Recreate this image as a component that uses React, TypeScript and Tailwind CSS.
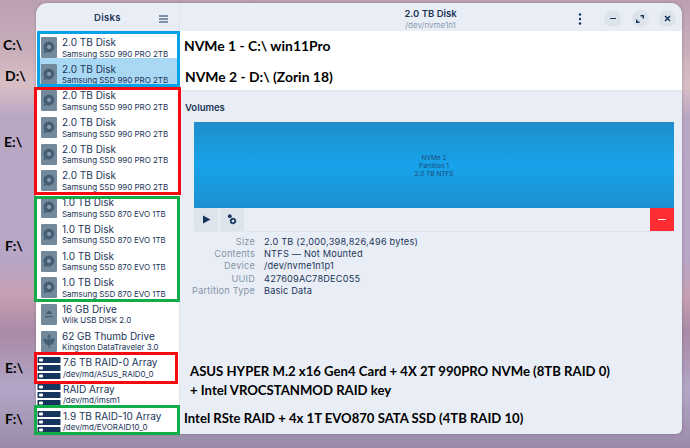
import { ReactNode } from "react";

const NOTE = "font-['Lato','Open_Sans',sans-serif] font-bold text-black";

type Kind = "disk" | "drive" | "thumb" | "raid";

const DISKS: { title: string; sub: string; kind: Kind; selected?: boolean }[] = [
  { title: "2.0 TB Disk", sub: "Samsung SSD 990 PRO 2TB", kind: "disk" },
  { title: "2.0 TB Disk", sub: "Samsung SSD 990 PRO 2TB", kind: "disk", selected: true },
  { title: "2.0 TB Disk", sub: "Samsung SSD 990 PRO 2TB", kind: "disk" },
  { title: "2.0 TB Disk", sub: "Samsung SSD 990 PRO 2TB", kind: "disk" },
  { title: "2.0 TB Disk", sub: "Samsung SSD 990 PRO 2TB", kind: "disk" },
  { title: "2.0 TB Disk", sub: "Samsung SSD 990 PRO 2TB", kind: "disk" },
  { title: "1.0 TB Disk", sub: "Samsung SSD 870 EVO 1TB", kind: "disk" },
  { title: "1.0 TB Disk", sub: "Samsung SSD 870 EVO 1TB", kind: "disk" },
  { title: "1.0 TB Disk", sub: "Samsung SSD 870 EVO 1TB", kind: "disk" },
  { title: "1.0 TB Disk", sub: "Samsung SSD 870 EVO 1TB", kind: "disk" },
  { title: "16 GB Drive", sub: "Wilk USB DISK 2.0", kind: "drive" },
  { title: "62 GB Thumb Drive", sub: "Kingston DataTraveler 3.0", kind: "thumb" },
  { title: "7.6 TB RAID-0 Array", sub: "/dev/md/ASUS_RAID0_0", kind: "raid" },
  { title: "RAID Array", sub: "/dev/md/imsm1", kind: "raid" },
  { title: "1.9 TB RAID-10 Array", sub: "/dev/md/EVORAID10_0", kind: "raid" },
];

const DETAILS = [
  ["Size", "2.0 TB (2,000,398,826,496 bytes)"],
  ["Contents", "NTFS — Not Mounted"],
  ["Device", "/dev/nvme1n1p1"],
  ["UUID", "427609AC78DEC055"],
  ["Partition Type", "Basic Data"],
];

function DiskIcon({ kind }: { kind: Kind }) {
  if (kind === "raid") {
    return (
      <svg width="24" height="24" viewBox="0 0 24 24" className="ml-[-4px] mt-[5px] shrink-0">
        {[1, 9, 17].map((y) => (
          <g key={y}>
            <rect x="0.5" y={y} width="23" height="6" rx="0.5" fill="#16355c" />
            <rect x="2" y={y + 1.5} width="4" height="3" rx="1" fill="#fff" />
          </g>
        ))}
      </svg>
    );
  }
  return (
    <svg width="16" height="21" viewBox="0 0 16 21" className="mt-[6px] shrink-0">
      <rect width="16" height="21" rx="1" fill="#738a9c" />
      {kind === "disk" && (
        <>
          <path d="M8 4.5a5.5 5.5 0 1 1-2.6 10.4L2.7 16l.6-3A5.5 5.5 0 0 1 8 4.5Z" fill="#465f75" />
          <circle cx="8" cy="10" r="2" fill="#8ca0b0" />
        </>
      )}
      {kind === "drive" && (
        <>
          <path d="M8 6.5 11.5 10h-7Z" fill="#43596d" />
          <rect x="4" y="12" width="8" height="1.2" fill="#43596d" />
        </>
      )}
      {kind === "thumb" && (
        <path
          d="M8 4v13M8 4 6.8 6h2.4ZM4 8.5v2.5c0 1.5 1 2 4 3 3-1 4-1.5 4-3V8.5M3 8h2v2H3Zm8 0h2v2h-2Z"
          fill="#465f75"
          stroke="#465f75"
          strokeWidth="1.1"
        />
      )}
    </svg>
  );
}

function RoundButton({ children }: { children: ReactNode }) {
  return (
    <div className="flex h-[17px] w-[17px] items-center justify-center rounded-full bg-[#dce3ea]">
      {children}
    </div>
  );
}

function Box({ className }: { className: string }) {
  return <div className={`absolute border-[3px] ${className}`} />;
}

function Label({ className, children }: { className: string; children: ReactNode }) {
  return <div className={`absolute text-[14px] leading-none ${NOTE} ${className}`}>{children}</div>;
}

export default function App() {
  return (
    <div className="relative h-[448px] w-[690px] overflow-hidden bg-[linear-gradient(180deg,#bba0b4_0%,#c9b0bb_12%,#d8bfc4_19%,#baa7c4_26%,#b7a6c6_58%,#c6a0b2_66%,#a98aa6_74%,#b2a6c6_87%,#9a8aa8_100%)] font-['Inter',sans-serif] text-[#1c3557]">
      {/* disks window */}
      <div className="absolute left-[36px] top-[3px] flex h-[431px] w-[646px] overflow-hidden rounded-b-[6px] rounded-t-[11px] bg-[#e9eef6] shadow-[0_0_3px_rgba(60,40,70,0.35)]">
        <aside className="flex w-[144px] shrink-0 flex-col border-r border-[#dfe5ec]">
          <div className="flex h-[28px] shrink-0 items-center justify-between pl-[58px] pr-[11px] pt-[3px]">
            <span className="text-[9.5px] font-semibold tracking-[0.3px]">Disks</span>
            <svg width="9" height="8" viewBox="0 0 9 8">
              <path d="M0 1h9M0 4h9M0 7h9" stroke="#16355c" strokeWidth="1.2" />
            </svg>
          </div>
          <div className="flex-1 bg-white pl-[3.5px]">
            {DISKS.map((d, i) => (
              <div
                key={i}
                className={`flex h-[26.7px] items-start gap-[5px] pl-[1.5px] ${d.selected ? "bg-[#a9d8f5]" : ""}`}
              >
                <DiskIcon kind={d.kind} />
                <div className={`min-w-0 pt-[5px] ${d.kind === "raid" ? "-ml-[3px]" : ""}`}>
                  <div className="whitespace-nowrap text-[10px] leading-[12.5px]">{d.title}</div>
                  <div className="whitespace-nowrap text-[8px] leading-[11px] tracking-[-0.03px]">{d.sub}</div>
                </div>
              </div>
            ))}
          </div>
        </aside>

        <main className="flex min-w-0 flex-1 flex-col">
          <header className="relative flex h-[28px] shrink-0 items-center justify-end pr-[6px] pt-[3px]">
            <div className="absolute left-0 right-0 top-[4px] pr-[1px] text-center">
              <div className="text-[9.5px] font-semibold leading-[13px]">2.0 TB Disk</div>
              <div className="text-[8px] leading-[10px] text-[#8e9cad]">/dev/nvme1n1</div>
            </div>
            <svg width="4" height="12" viewBox="0 0 4 12" className="mr-[22px]">
              <circle cx="2" cy="1.5" r="1.2" fill="#16355c" />
              <circle cx="2" cy="6" r="1.2" fill="#16355c" />
              <circle cx="2" cy="10.5" r="1.2" fill="#16355c" />
            </svg>
            <div className="flex gap-[10.5px]">
              <RoundButton>
                <div className="h-[1.5px] w-[6px] bg-[#16355c]" />
              </RoundButton>
              <RoundButton>
                <svg width="8" height="8" viewBox="0 0 8 8" fill="none" stroke="#16355c" strokeWidth="1.4">
                  <path d="M4.5.7h2.8v2.8M.7 4.5v2.8h2.8" />
                </svg>
              </RoundButton>
              <RoundButton>
                <svg width="7" height="7" viewBox="0 0 7 7" stroke="#16355c" strokeWidth="1.5">
                  <path d="m1 1 5 5M6 1 1 6" />
                </svg>
              </RoundButton>
            </div>
          </header>

          <div className={`h-[60px] shrink-0 border-b border-[#e2e7ee] bg-white pl-[4px] text-[13.9px] ${NOTE}`}>
            <div className="pt-[4px] leading-[22px]">NVMe 1 - C:\ win11Pro</div>
            <div className="pl-[1px] pt-[9px] leading-[22px]">NVMe 2 - D:\ (Zorin 18)</div>
          </div>

          <div className="flex flex-1 flex-col pl-[5px] pr-[8px]">
            <h2 className="pt-[11px] text-[9.5px] font-semibold leading-[12px]">Volumes</h2>
            <div className="ml-[9px] mt-[8px] rounded-b-[2px] border-b border-[#dfe5ec]">
              <div className="flex h-[86px] items-center justify-center bg-[linear-gradient(180deg,#1e8ecb_0%,#17a3ea_50%,#1c90d0_100%)] text-center text-[6.5px] leading-[8px] text-[#1c4a78]">
                <div className="pt-[2px]">
                  NVMe 2
                  <br />
                  Partition 1
                  <br />
                  2.0 TB NTFS
                </div>
              </div>
              <div className="flex h-[23px] gap-[2px]">
                <div className="flex w-[24px] items-center justify-center bg-[#dde4ec]">
                  <svg width="9" height="9" viewBox="0 0 9 9">
                    <path d="M1 .5 8.5 4.5 1 8.5Z" fill="#16355c" />
                  </svg>
                </div>
                <div className="flex w-[24px] items-center justify-center bg-[#dde4ec]">
                  <svg width="10" height="11" viewBox="0 0 10 11" fill="#16355c">
                    <circle cx="2.8" cy="2.2" r="1.9" />
                    <circle cx="6" cy="7" r="2.4" fill="none" stroke="#16355c" strokeWidth="1.8" strokeDasharray="1.6 0.6" />
                    <circle cx="6" cy="7" r="2.2" fill="none" stroke="#16355c" strokeWidth="1.2" />
                  </svg>
                </div>
                <div className="ml-auto flex w-[24px] items-center justify-center bg-[#ff2d33]">
                  <div className="h-[1.5px] w-[8px] bg-white" />
                </div>
              </div>
            </div>

            <dl className="mt-[4px] grid grid-cols-[70px_1fr] gap-x-[9px] text-[9.2px] leading-[12.2px] tracking-[0.2px]">
              {DETAILS.map(([k, v]) => (
                <div key={k} className="contents">
                  <dt className="whitespace-nowrap text-right text-[#8695a6]">{k}</dt>
                  <dd className="whitespace-nowrap">{v}</dd>
                </div>
              ))}
            </dl>

            <div className={`ml-[4px] mt-[65px] pl-[1px] text-[13.15px] leading-[19px] ${NOTE}`}>
              <div>ASUS HYPER M.2 x16 Gen4 Card + 4X 2T 990PRO NVMe (8TB RAID 0)</div>
              <div>+ Intel VROCSTANMOD RAID key</div>
            </div>
            <div className={`ml-[-1px] mt-[9px] text-[13.1px] leading-[19px] ${NOTE}`}>
              Intel RSte RAID + 4x 1T EVO870 SATA SSD (4TB RAID 10)
            </div>
          </div>
        </main>
      </div>

      {/* annotation boxes drawn over the window */}
      <Box className="left-[37px] top-[31px] h-[56px] w-[143px] border-[#0aa2e6]" />
      <Box className="left-[34px] top-[87px] h-[108px] w-[147px] border-[#f50a12]" />
      <Box className="left-[34px] top-[196px] h-[106px] w-[146px] border-[#12ad49]" />
      <Box className="left-[34px] top-[352px] h-[32px] w-[144px] border-[#f50a12]" />
      <Box className="left-[34px] top-[405px] h-[30px] w-[146px] border-[#12ad49]" />

      <Label className="left-[3px] top-[38px]">C:\</Label>
      <Label className="left-[5px] top-[69px]">D:\</Label>
      <Label className="left-[4px] top-[135px]">E:\</Label>
      <Label className="left-[5px] top-[239px]">F:\</Label>
      <Label className="left-[5px] top-[361px]">E:\</Label>
      <Label className="left-[5px] top-[412px]">F:\</Label>
    </div>
  );
}
